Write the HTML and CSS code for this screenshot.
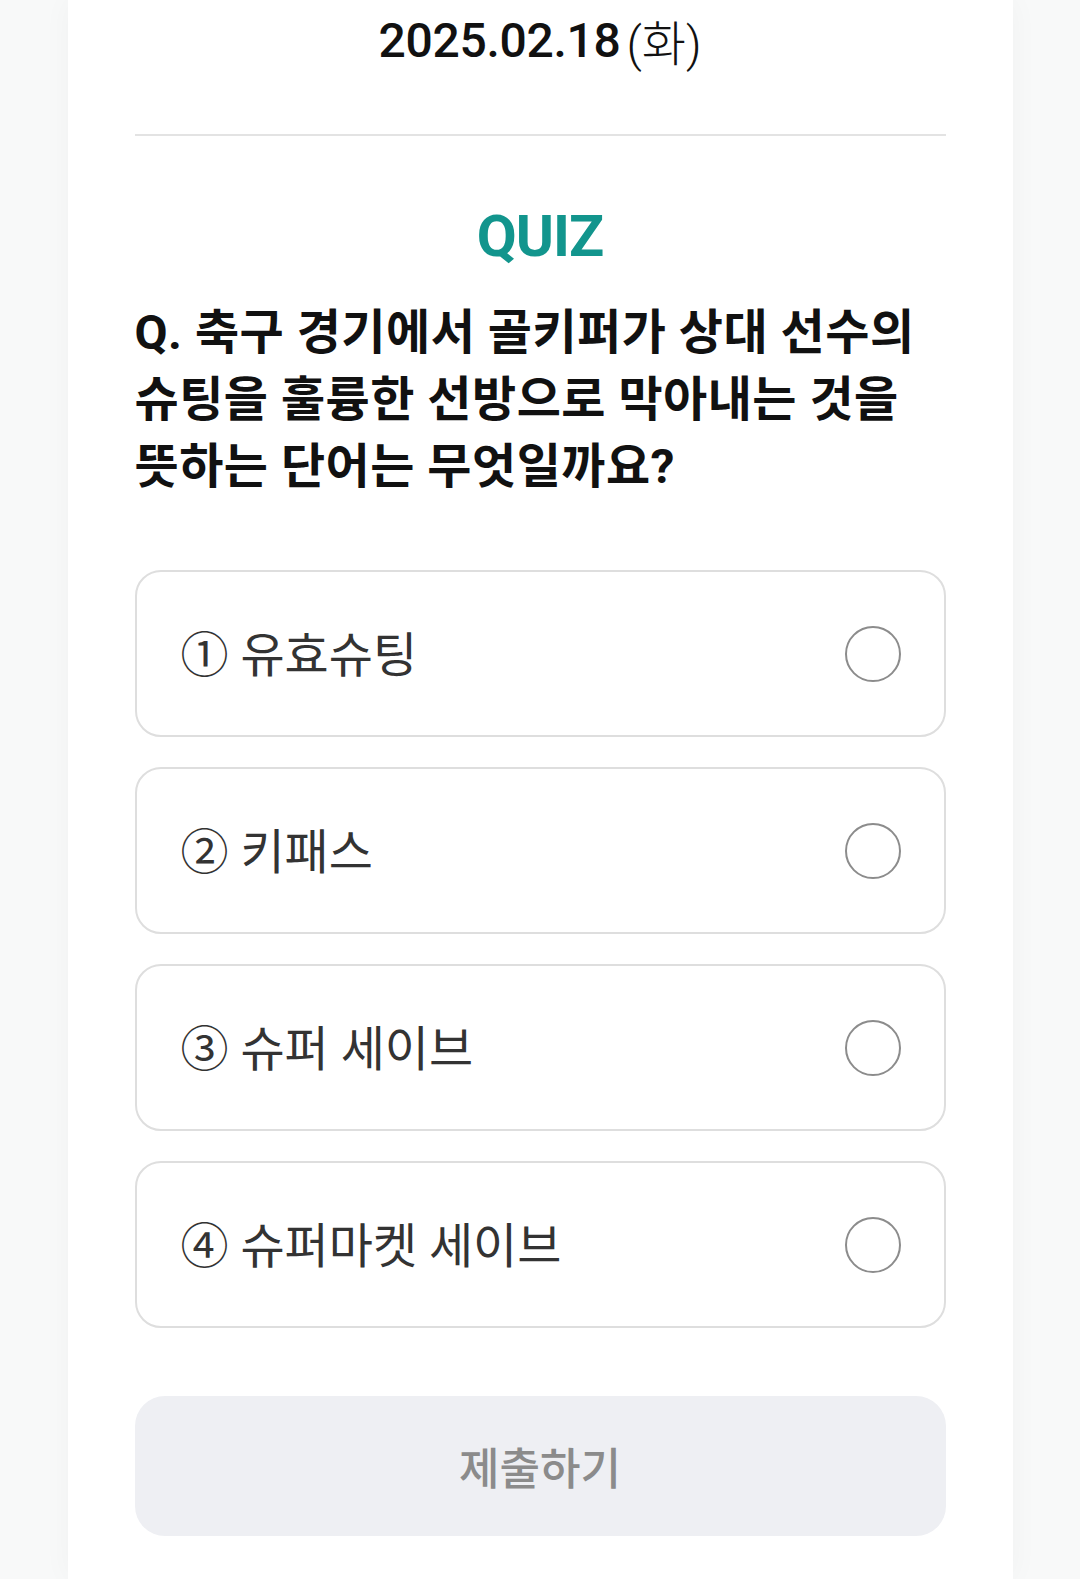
FILE: index.html
```html
<!DOCTYPE html>
<html lang="ko">
<head>
<meta charset="utf-8">
<title>QUIZ</title>
<link rel="stylesheet" href="styles.css">
</head>
<body>
<main class="panel">
  <header class="date"><span class="date-num">2025.02.18</span><span class="date-day">(화)</span></header>
  <hr class="divider">
  <h1 class="quiz-title">QUIZ</h1>
  <p class="question">Q. 축구 경기에서 골키퍼가 상대 선수의 슈팅을 훌륭한 선방으로 막아내는 것을 뜻하는 단어는 무엇일까요?</p>
  <ul class="options">
    <li class="option"><span class="option-label">① 유효슈팅</span><span class="radio"></span></li>
    <li class="option"><span class="option-label">② 키패스</span><span class="radio"></span></li>
    <li class="option"><span class="option-label">③ 슈퍼 세이브</span><span class="radio"></span></li>
    <li class="option"><span class="option-label">④ 슈퍼마켓 세이브</span><span class="radio"></span></li>
  </ul>
  <button class="submit" type="button">제출하기</button>
</main>
</body>
</html>
```

FILE: styles.css
```css
html, body {
  margin: 0;
  padding: 0;
}
body {
  background: #f8f9f9;
  font-family: Roboto, "Noto Sans CJK KR", sans-serif;
  min-height: 1579px;
  display: flex;
  justify-content: center;
}
.panel {
  width: 945px;
  box-sizing: border-box;
  background: #ffffff;
  padding: 0 67px 40px;
  min-height: 1579px;
  box-shadow: 0 0 28px rgba(0, 0, 0, 0.035);
}
.date {
  height: 80px;
  display: flex;
  align-items: center;
  justify-content: center;
  color: #111;
}
.date-num {
  font-size: 48px;
  font-weight: 500;
  letter-spacing: -0.3px;
}
.date-day {
  font-size: 48px;
  font-weight: 300;
  margin-left: 6px;
  color: #111;
}
.divider {
  border: 0;
  height: 2px;
  background: #e3e3e3;
  margin: 54px 0 0;
}
.quiz-title {
  margin: 64px 0 0;
  text-align: center;
  color: #12958d;
  font-size: 58px;
  font-weight: 700;
  line-height: 72px;
  letter-spacing: -1px;
}
.question {
  margin: 27px 0 0;
  font-size: 48px;
  font-weight: 700;
  line-height: 67px;
  color: #111;
  letter-spacing: 0.5px;
  word-break: keep-all;
}
.options {
  list-style: none;
  margin: 70px 0 0;
  padding: 0;
  display: flex;
  flex-direction: column;
  gap: 30px;
}
.option {
  height: 167px;
  box-sizing: border-box;
  border: 2px solid #dedede;
  border-radius: 26px;
  display: flex;
  align-items: center;
  justify-content: space-between;
  padding: 0 43px 0 44px;
}
.option-label {
  font-size: 48px;
  color: #333;
  font-weight: 400;
  padding-bottom: 6px;
}
.radio {
  width: 56px;
  height: 56px;
  box-sizing: border-box;
  border: 2px solid #8c8c8c;
  border-radius: 50%;
}
.submit {
  display: block;
  width: 100%;
  height: 140px;
  margin-top: 68px;
  border: 0;
  border-radius: 30px;
  background: #eeeff3;
  color: #8b8b8b;
  font-family: Roboto, "Noto Sans CJK KR", sans-serif;
  font-size: 44px;
  font-weight: 500;
}
```
